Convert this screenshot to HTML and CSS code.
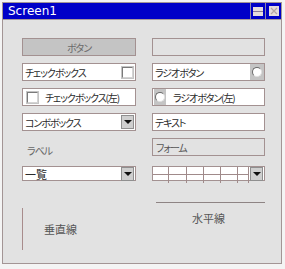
FILE: index.html
```html
<!DOCTYPE html>
<html lang="ja">
<head>
    <meta charset="UTF-8">
    <title>Screen1</title>
    <link rel="stylesheet" href="styles.css">
</head>
<body>
    <div class="window">
        <div class="titlebar">
            <span class="title">Screen1</span>
            <div class="tb-buttons">
                <span class="tb-btn"><span class="ico-restore"></span></span>
                <span class="tb-btn">
                    <svg width="10" height="10" viewBox="0 0 10 10">
                        <rect x="0" y="0" width="10" height="10" fill="#e6dcdc"/>
                        <path d="M2 2 L8 8 M8 2 L2 8" stroke="#b4a4a4" stroke-width="1.2"/>
                    </svg>
                </span>
            </div>
        </div>

        <div class="content">
            <div class="ctl button">ボタン</div>
            <div class="ctl empty"></div>

            <div class="ctl field">チェックボックス<span class="chk chk-right"></span></div>
            <div class="ctl field">ラジオボタン<span class="rad rad-right"><span class="dot"></span></span></div>

            <div class="ctl field"><span class="chk chk-left"></span>チェックボックス(左)</div>
            <div class="ctl field"><span class="rad rad-left"><span class="dot"></span></span>ラジオボタン(左)</div>

            <div class="ctl field">コンボボックス<span class="dd"></span></div>
            <div class="ctl field">テキスト</div>

            <div class="label">ラベル</div>
            <div class="ctl form">フォーム</div>

            <div class="ctl field list">一覧<span class="dd"></span></div>
            <div class="ctl grid">
                <div class="cells">
                    <span></span><span></span><span></span><span></span><span></span><span></span>
                    <span></span><span></span><span></span><span></span><span></span><span></span>
                </div>
                <span class="dd"></span>
            </div>

            <div class="vline-box">
                <div class="vline"></div>
                <span class="line-text">垂直線</span>
            </div>
            <div class="hline-box">
                <div class="hline"></div>
                <span class="line-text">水平線</span>
            </div>
        </div>
    </div>
</body>
</html>
```

FILE: styles.css
```css
body {
    margin: 0;
    padding: 0;
    background-color: #f4f4f4;
}

.window {
    margin: 2px 0 0 2px;
    width: 280px;
    height: 262px;
    box-sizing: border-box;
    border: 1px solid #a39595;
    background-color: #e2e2e2;
}

.titlebar {
    height: 16px;
    background-color: #0000c8;
    border-bottom: 1px solid #a89a9a;
    display: flex;
    align-items: center;
    justify-content: space-between;
}

.title {
    color: #fff;
    font-family: "DejaVu Sans", sans-serif;
    font-size: 12px;
    padding-left: 5px;
}

.tb-buttons {
    display: flex;
    height: 100%;
}

.tb-btn {
    width: 14px;
    border-left: 1px solid #8a84a8;
    display: flex;
    align-items: center;
    justify-content: center;
}

.tb-btn:last-child {
    width: 15px;
}

.ico-restore {
    width: 10px;
    height: 9px;
    background-color: #e6dcdc;
    position: relative;
}

.ico-restore::after {
    content: "";
    position: absolute;
    left: 0;
    right: 0;
    top: 4px;
    height: 1px;
    background-color: #8a7a9a;
}

.content {
    display: grid;
    grid-template-columns: 114px 113px;
    grid-auto-rows: 18px;
    column-gap: 16px;
    row-gap: 7px;
    padding: 18px 0 0 19px;
}

.ctl {
    box-sizing: border-box;
    border: 1px solid #a39191;
    font-family: "Noto Sans CJK JP", sans-serif;
    font-size: 10px;
    letter-spacing: -1.1px;
    font-feature-settings: "palt";
    white-space: nowrap;
    color: #2a2a2a;
    display: flex;
    align-items: center;
}

.button {
    background-color: #c4c4c4;
    color: #6a6a6a;
    justify-content: center;
}

.empty {
    background-color: #e2e2e2;
}

.field {
    background-color: #fff;
    padding-left: 2px;
}

.chk {
    flex: none;
    width: 11px;
    height: 11px;
    box-sizing: border-box;
    background-color: #fff;
    border: 1px solid;
    border-color: #7a7a7a #d4d4d4 #d4d4d4 #7a7a7a;
    box-shadow: 0 0 0 1px #c4c4c4;
}

.chk-right {
    margin-left: auto;
    margin-right: 2px;
}

.chk-left {
    margin: 0 7px 0 2px;
}

.rad {
    flex: none;
    width: 14px;
    height: 16px;
    background-color: #c4c4c4;
    display: flex;
    align-items: center;
    justify-content: center;
}

.rad-right {
    margin-left: auto;
}

.rad-left {
    width: 12px;
    margin: 0 7px 0 -1px;
}

.dot {
    width: 10px;
    height: 10px;
    box-sizing: border-box;
    border-radius: 50%;
    background-color: #fff;
    border: 1px solid;
    border-color: #6a6a6a #e0e0e0 #e0e0e0 #6a6a6a;
}

.dd {
    flex: none;
    width: 13px;
    height: 14px;
    box-sizing: border-box;
    margin-left: auto;
    margin-right: 1px;
    background-color: #cfcfcf;
    border: 1px solid #8f8f8f;
    display: flex;
    align-items: center;
    justify-content: center;
}

.dd::after {
    content: "";
    border-left: 4px solid transparent;
    border-right: 4px solid transparent;
    border-top: 4px solid #111;
}

.label {
    font-family: "Noto Sans CJK JP", sans-serif;
    font-size: 10px;
    letter-spacing: -1.1px;
    font-feature-settings: "palt";
    color: #666;
    padding: 5px 0 0 5px;
}

.form {
    background-color: #e2e2e2;
    color: #555;
    padding-left: 3px;
}

.list {
    margin-top: 3px;
    letter-spacing: 0;
    font-size: 11px;
}

.grid {
    margin-top: 3px;
    background-color: #fff;
    align-items: stretch;
}

.cells {
    display: grid;
    grid-template-columns: 16px 18px 17px 17px 17px 11px;
    grid-template-rows: 8px 8px;
}

.cells span {
    border-right: 1px solid #a08a8a;
    border-bottom: 1px solid #a08a8a;
}

.cells span:nth-child(n+7) {
    border-bottom: none;
}

.grid .dd {
    align-self: center;
}

.vline-box {
    grid-row: span 4;
    display: flex;
    align-items: center;
    margin-top: 20px;
    height: 42px;
}

.vline {
    width: 1px;
    height: 42px;
    background-color: #a88c8c;
    margin-right: 21px;
}

.line-text {
    font-family: "Noto Sans CJK JP", sans-serif;
    font-size: 11px;
    color: #555;
}

.hline-box {
    display: flex;
    flex-direction: column;
    align-items: center;
    padding-top: 14px;
}

.hline {
    width: 109px;
    height: 0;
    border-top: 1px solid #8e8484;
    margin: 0 0 7px 3px;
}
```
